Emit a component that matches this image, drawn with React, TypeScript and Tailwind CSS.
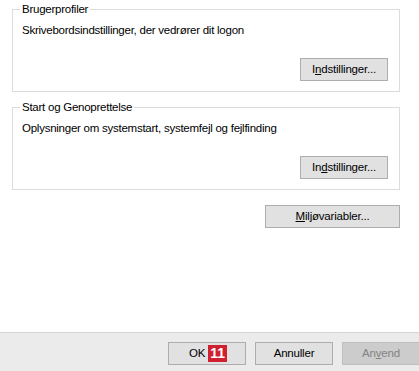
const font = { fontFamily: '"Segoe UI", "Liberation Sans", Arial, sans-serif' };

function Btn({ children, className = "" }: { children: React.ReactNode; className?: string }) {
  return (
    <div
      className={`h-[23px] border border-[#adadad] bg-[#e1e1e1] text-[11.5px] tracking-[-0.2px] text-black flex items-center justify-center leading-none ${className}`}
    >
      {children}
    </div>
  );
}

function Group({
  title,
  text,
  children,
}: {
  title: string;
  text: string;
  children: React.ReactNode;
}) {
  return (
    <div className="relative h-[83px] border border-[#dcdcdc] flex flex-col pl-[9px] pr-[11px] pt-[12px] pb-[10px]">
      <span className="absolute -top-[9px] left-[7px] bg-white px-[2px] text-[11.5px] tracking-[-0.25px] leading-[16px] text-black">
        {title}
      </span>
      <div className="text-[11.5px] tracking-[-0.25px] leading-[16px] text-black">{text}</div>
      <div className="mt-auto self-end">{children}</div>
    </div>
  );
}

export default function App() {
  return (
    <div className="w-[419px] h-[371px] overflow-hidden flex flex-col bg-white" style={font}>
      <div className="flex-1 flex flex-col pt-[9px] pl-[12px] pr-[19px]">
        <Group title="Brugerprofiler" text="Skrivebordsindstillinger, der vedrører dit logon">
          <Btn className="w-[88px]">
            I<span className="underline">n</span>dstillinger...
          </Btn>
        </Group>
        <div className="mt-[15px]">
          <Group
            title="Start og Genoprettelse"
            text="Oplysninger om systemstart, systemfejl og fejlfinding"
          >
            <Btn className="w-[88px]">
              In<span className="underline">d</span>stillinger...
            </Btn>
          </Group>
        </div>
        <div className="mt-[15px] self-end">
          <Btn className="w-[135px]">
            <span className="underline">M</span>iljøvariabler...
          </Btn>
        </div>
      </div>
      <div className="h-[39px] bg-[#ebebeb] border-t border-[#d6d6d6] flex items-start pt-[9px] pl-[168px] gap-[9px]">
        <Btn className="w-[78px] shrink-0 relative">
          <span className="ml-[2px]">OK</span>
          <span className="ml-[3px] h-[17px] px-[2px] bg-[#d0202f] text-white font-bold text-[14px] tracking-normal leading-[17px] flex items-center">
            11
          </span>
        </Btn>
        <Btn className="w-[78px] shrink-0">Annuller</Btn>
        <div className="w-[78px] shrink-0 h-[23px] border border-[#bfbfbf] bg-[#cccccc] text-[11.5px] tracking-[-0.2px] text-[#838383] flex items-center justify-center leading-none">
          An<span className="underline">v</span>end
        </div>
      </div>
    </div>
  );
}
